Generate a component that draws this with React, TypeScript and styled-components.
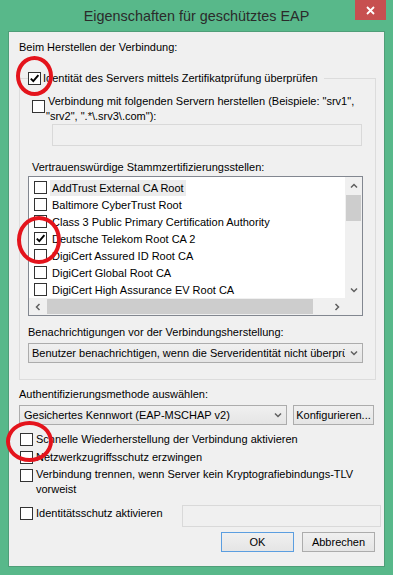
import { memo } from 'react';

import styled, { createGlobalStyle } from 'styled-components';

const certs = [
  { name: 'AddTrust External CA Root', checked: false, focused: true },
  { name: 'Baltimore CyberTrust Root', checked: false },
  { name: 'Class 3 Public Primary Certification Authority', checked: false },
  { name: 'Deutsche Telekom Root CA 2', checked: true },
  { name: 'DigiCert Assured ID Root CA', checked: false },
  { name: 'DigiCert Global Root CA', checked: false },
  { name: 'DigiCert High Assurance EV Root CA', checked: false },
];

// red annotation rings drawn over the screenshot
const marks = [
  { x: 16, y: 56, w: 37, h: 40 },
  { x: 17, y: 216, w: 44, h: 48 },
  { x: 6, y: 421, w: 47, h: 41 },
];

const Check = ({ checked }: { checked?: boolean }) => (
  <Box>
    {checked && (
      <svg width="11" height="11" viewBox="0 0 11 11">
        <path d="M1.8 5.6 4.3 8.2 9.4 2.2" fill="none" stroke="#000" strokeWidth="1.9" />
      </svg>
    )}
  </Box>
);

const Arrow = ({ dir }: { dir: 'up' | 'down' | 'left' | 'right' }) => {
  const rot = { down: 0, up: 180, left: 90, right: -90 }[dir];
  return (
    <svg width="8" height="8" viewBox="0 0 8 8" style={{ transform: `rotate(${rot}deg)` }}>
      <path d="M1 2.5 4 5.5 7 2.5" fill="none" stroke="#606060" strokeWidth="1.5" />
    </svg>
  );
};

const App = () => {
  return (
    <Window>
      <GlobalStyle />
      <TitleBar>
        <span />
        <Title>Eigenschaften für geschütztes EAP</Title>
        <CloseButton>
          <svg width="9" height="9" viewBox="0 0 9 9">
            <path d="M1 1 8 8M8 1 1 8" stroke="#fff" strokeWidth="1.8" />
          </svg>
        </CloseButton>
      </TitleBar>
      <Client>
        <Caption>Beim Herstellen der Verbindung:</Caption>
        <Group>
          <GroupHead>
            <Check checked />
            <span>Identität des Servers mittels Zertifikatprüfung überprüfen</span>
          </GroupHead>
          <ServerRow>
            <Check />
            <ServerText>
              Verbindung mit folgenden Servern herstellen (Beispiele: "srv1", "srv2", ".*\.srv3\.com"):
            </ServerText>
          </ServerRow>
          <Field $indent={24} $right={1} />
          <Caption $top={13} $indent={4}>
            Vertrauenswürdige Stammzertifizierungsstellen:
          </Caption>
          <ListBox>
            <Rows>
              {certs.map((c) => (
                <CertRow key={c.name}>
                  <Check checked={c.checked} />
                  <CertName $focused={c.focused}>{c.name}</CertName>
                </CertRow>
              ))}
            </Rows>
            <VScroll>
              <ArrowCell>
                <Arrow dir="up" />
              </ArrowCell>
              <VThumb />
              <Spacer />
              <ArrowCell>
                <Arrow dir="down" />
              </ArrowCell>
            </VScroll>
            <HScroll>
              <ArrowCell>
                <Arrow dir="left" />
              </ArrowCell>
              <HThumb />
              <Spacer />
              <ArrowCell>
                <Arrow dir="right" />
              </ArrowCell>
            </HScroll>
            <Corner />
          </ListBox>
          <Caption $top={8}>Benachrichtigungen vor der Verbindungsherstellung:</Caption>
          <Combo $top={3}>
            <ComboText $pad={3}>
              Benutzer benachrichtigen, wenn die Serveridentität nicht überprüft werden kann
            </ComboText>
            <ComboArrow>
              <Arrow dir="down" />
            </ComboArrow>
          </Combo>
        </Group>
        <Caption $top={6}>Authentifizierungsmethode auswählen:</Caption>
        <MethodRow>
          <Combo>
            <ComboText $pad={4}>Gesichertes Kennwort (EAP-MSCHAP v2)</ComboText>
            <ComboArrow>
              <Arrow dir="down" />
            </ComboArrow>
          </Combo>
          <Button $width={81}>Konfigurieren...</Button>
        </MethodRow>
        <Options>
          <OptionRow>
            <Check />
            <OptionText>Schnelle Wiederherstellung der Verbindung aktivieren</OptionText>
          </OptionRow>
          <OptionRow>
            <Check />
            <OptionText>Netzwerkzugriffsschutz erzwingen</OptionText>
          </OptionRow>
          <OptionRow>
            <Check />
            <OptionText $lines>
              Verbindung trennen, wenn Server kein Kryptografiebindungs-TLV vorweist
            </OptionText>
          </OptionRow>
        </Options>
        <IdentityRow>
          <OptionRow>
            <Check />
            <OptionText>Identitätsschutz aktivieren</OptionText>
          </OptionRow>
          <Field $width={199} />
        </IdentityRow>
        <Footer>
          <Button $width={73} $default>
            OK
          </Button>
          <Button $width={73}>Abbrechen</Button>
        </Footer>
      </Client>
      {marks.map((m, i) => (
        <Mark key={i} style={{ left: m.x, top: m.y, width: m.w, height: m.h }} />
      ))}
    </Window>
  );
};

export default memo(App);

const GlobalStyle = createGlobalStyle`
  html, body {
    margin: 0;
    padding: 0;
  }
  body {
    background: #58b88a;
    font-family: 'Liberation Sans', Arial, sans-serif;
    font-size: 11px;
    color: #000;
  }
`;

const Window = styled.div`
  position: relative;
  width: 393px;
  height: 575px;
  background: #58b88a;
  display: flex;
  flex-direction: column;
  overflow: hidden;
`;

const TitleBar = styled.div`
  height: 31px;
  flex-shrink: 0;
  display: grid;
  grid-template-columns: 1fr auto 1fr;
  align-items: center;
`;

const Title = styled.div`
  font-size: 14.4px;
  color: #2b2b2b;
  white-space: nowrap;
`;

const CloseButton = styled.div`
  justify-self: end;
  align-self: start;
  width: 31px;
  height: 20px;
  margin-right: 7px;
  background: #c75050;
  display: flex;
  align-items: center;
  justify-content: center;
`;

const Client = styled.div`
  flex: 1;
  margin: 0 8px 8px;
  background: #f0f0f0;
  border: 1px solid #4f9e78;
  display: flex;
  flex-direction: column;
  padding: 7px 3px 0 10px;
`;

const Caption = styled.div<{ $top?: number; $indent?: number }>`
  line-height: 16px;
  white-space: nowrap;
  margin-top: ${(p) => p.$top ?? 0}px;
  margin-left: ${(p) => p.$indent ?? 0}px;
`;

const Box = styled.span`
  width: 13px;
  height: 13px;
  box-sizing: border-box;
  border: 1px solid #333;
  background: #fff;
  flex-shrink: 0;
  display: inline-flex;
  align-items: center;
  justify-content: center;
`;

const Group = styled.fieldset`
  margin: 15px 5px 0 0;
  padding: 8px 12px 16px 8px;
  border: 1px solid #dcdcdc;
  min-width: 0;
`;

const GroupHead = styled.legend`
  display: flex;
  align-items: center;
  gap: 2px;
  height: 16px;
  padding: 0 6px 0 0;
  white-space: nowrap;
`;

const ServerRow = styled.div`
  display: flex;
  align-items: flex-start;
  margin-left: 4px;
  line-height: 15px;

  ${Box} {
    margin-top: 6px;
  }
`;

const ServerText = styled.div`
  margin-left: 1px;
  text-indent: 2px;
`;

const Field = styled.div<{ $indent?: number; $right?: number; $width?: number }>`
  height: 22px;
  box-sizing: border-box;
  border: 1px solid #d9d9d9;
  background: #f0f0f0;
  margin-left: ${(p) => p.$indent ?? 0}px;
  margin-right: ${(p) => p.$right ?? 0}px;
  ${(p) => (p.$width ? `width: ${p.$width}px; flex-shrink: 0;` : '')}
`;

const ListBox = styled.div`
  margin-top: 1px;
  height: 140px;
  box-sizing: border-box;
  border: 1px solid #828790;
  background: #fff;
  display: grid;
  grid-template-columns: 1fr 17px;
  grid-template-rows: 1fr 17px;
`;

const Rows = styled.div`
  overflow: hidden;
  padding-top: 2px;
`;

const CertRow = styled.div`
  height: 17px;
  display: flex;
  align-items: center;
  padding-left: 5px;
  gap: 3px;
  white-space: nowrap;
`;

const CertName = styled.span<{ $focused?: boolean }>`
  line-height: 16px;
  padding: 0 2px;
  background: ${(p) => (p.$focused ? '#ececec' : 'transparent')};
`;

const VScroll = styled.div`
  background: #f0f0f0;
  display: flex;
  flex-direction: column;
`;

const HScroll = styled.div`
  background: #f0f0f0;
  display: flex;
`;

const Corner = styled.div`
  background: #f0f0f0;
`;

const ArrowCell = styled.div`
  width: 17px;
  height: 17px;
  flex-shrink: 0;
  display: flex;
  align-items: center;
  justify-content: center;
`;

const VThumb = styled.div`
  height: 26px;
  margin: 1px 1px 0;
  background: #cdcdcd;
`;

const HThumb = styled.div`
  width: 266px;
  margin: 1px 0 1px 1px;
  background: #cdcdcd;
`;

const Spacer = styled.div`
  flex: 1;
`;

const Combo = styled.div<{ $top?: number }>`
  flex: 1;
  min-width: 0;
  height: 20px;
  box-sizing: border-box;
  margin-top: ${(p) => p.$top ?? 0}px;
  border: 1px solid #acacac;
  background: linear-gradient(#f0f0f0, #e5e5e5);
  display: flex;
  align-items: center;
`;

const ComboText = styled.span<{ $pad: number }>`
  flex: 1;
  min-width: 0;
  overflow: hidden;
  white-space: nowrap;
  padding-left: ${(p) => p.$pad}px;
`;

const ComboArrow = styled.span`
  width: 17px;
  flex-shrink: 0;
  display: flex;
  justify-content: center;
`;

const MethodRow = styled.div`
  display: flex;
  gap: 6px;
  margin: 3px 7px 0 0;
`;

const Button = styled.div<{ $width: number; $default?: boolean }>`
  width: ${(p) => p.$width}px;
  height: 20px;
  box-sizing: border-box;
  border: 1px solid ${(p) => (p.$default ? '#5b9ee0' : '#acacac')};
  background: linear-gradient(#f0f0f0, #e5e5e5);
  display: flex;
  align-items: center;
  justify-content: center;
  white-space: nowrap;
`;

const Options = styled.div`
  display: flex;
  flex-direction: column;
  gap: 2px;
  margin: 6px 0 0 1px;
`;

const OptionRow = styled.div`
  display: flex;
  align-items: flex-start;
  gap: 3px;

  ${Box} {
    margin-top: 2px;
  }
`;

const OptionText = styled.div<{ $lines?: boolean }>`
  line-height: ${(p) => (p.$lines ? 15 : 16)}px;
  width: ${(p) => (p.$lines ? '325px' : 'auto')};
  white-space: ${(p) => (p.$lines ? 'normal' : 'nowrap')};
`;

const IdentityRow = styled.div`
  display: flex;
  justify-content: space-between;
  align-items: flex-start;
  margin: 8px 0 0 1px;

  ${OptionRow} {
    margin-top: 0;
  }
`;

const Footer = styled.div`
  display: flex;
  justify-content: flex-end;
  gap: 8px;
  margin: 5px 6px 0 0;
`;

const Mark = styled.div`
  position: absolute;
  box-sizing: border-box;
  border: 4px solid #e4141c;
  border-radius: 50%;
  pointer-events: none;
`;
